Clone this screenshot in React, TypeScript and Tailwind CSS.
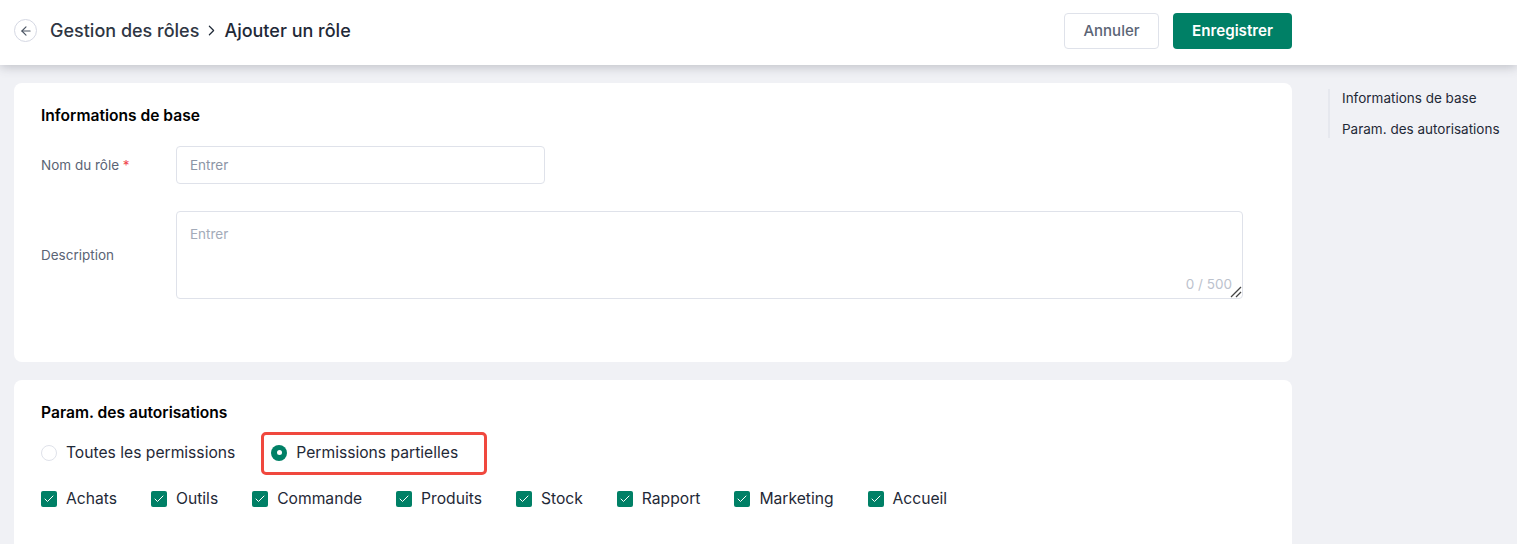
import { ArrowLeft, Check, ChevronRight } from 'lucide-react';

const MODULES = ['Achats', 'Outils', 'Commande', 'Produits', 'Stock', 'Rapport', 'Marketing', 'Accueil'];

function Header() {
  return (
    <header className="relative z-10 flex h-[65px] items-center justify-between bg-white pb-[4px] pl-[14px] pr-[225px] shadow-[0_2px_10px_rgba(60,66,80,0.28)]">
      <div className="flex items-center">
        <button className="flex h-[23px] w-[23px] items-center justify-center rounded-full border border-[#d5d8e3] text-[#4b5563]">
          <ArrowLeft size={14} strokeWidth={2} />
        </button>
        <span className="ml-[13px] text-[18px] font-medium text-[#2f3643]">Gestion des rôles</span>
        <ChevronRight size={17} strokeWidth={1.7} className="mx-[4px] text-[#1f2937]" />
        <span className="text-[18px] font-medium text-[#1f2937]">Ajouter un rôle</span>
      </div>
      <div className="flex items-center gap-[14px]">
        <button className="h-[36px] w-[95px] rounded border border-[#dfe2ea] bg-white pt-[1px] text-[15px] font-medium text-[#5b6475]">Annuler</button>
        <button className="h-[36px] w-[119px] rounded bg-[#008066] pt-[1px] text-[15.2px] font-semibold text-white">Enregistrer</button>
      </div>
    </header>
  );
}

function Card({ title, className, children }: { title: string; className: string; children: React.ReactNode }) {
  return (
    <section className={`rounded-lg bg-white px-[27px] ${className}`}>
      <h2 className="text-[15.6px] leading-[22px] font-semibold text-black">{title}</h2>
      {children}
    </section>
  );
}

export default function App() {
  return (
    <div className="h-[544px] overflow-hidden bg-[#f0f1f5] font-['Inter',sans-serif]">
      <Header />
      <div className="flex pl-[14px] pt-[18px]">
        <main className="flex w-[1278px] shrink-0 flex-col gap-[18px]">
          <Card title="Informations de base" className="h-[279px] pt-[22px]">
            <div className="mt-[19px] flex items-center">
              <label className="w-[135px] text-[13.5px] leading-[20px] text-[#5b6475]">
                Nom du rôle <span className="text-[#f0484e]">*</span>
              </label>
              <div className="flex h-[38px] w-[369px] items-center rounded border border-[#dfe2ea] px-[13px] text-[13.5px] leading-[20px] text-[#8c95a6]">Entrer</div>
            </div>
            <div className="mt-[27px] flex items-center">
              <label className="w-[135px] text-[13.5px] leading-[20px] text-[#5b6475]">Description</label>
              <div className="relative h-[88px] w-[1067px] rounded border border-[#dfe2ea] px-[13px] pt-[13px] text-[13.5px] leading-[18px] text-[#a3abb9]">
                Entrer
                <span className="absolute bottom-[5px] right-[10px] text-[13.5px] leading-[18px] text-[#bcc2cd]">0 / 500</span>
                <svg width="12" height="12" viewBox="0 0 12 12" className="absolute bottom-0 right-0 text-[#444]">
                  <path d="M1 11 L11 1 M6 11 L11 6" stroke="currentColor" strokeWidth="1.3" />
                </svg>
              </div>
            </div>
          </Card>

          <Card title="Param. des autorisations" className="h-[200px] pt-[22px]">
            <div className="mt-[17px] flex h-[24px] items-center text-[15.65px] text-[#1f2937]">
              <span className="h-4 w-4 rounded-full border border-[#dfe2ea]" />
              <span className="ml-[9px]">Toutes les permissions</span>
              <div className="relative ml-[36px] flex items-center">
                <span className="flex h-4 w-4 items-center justify-center rounded-full bg-[#008066]">
                  <span className="h-[5px] w-[5px] rounded-full bg-white" />
                </span>
                <span className="ml-[9px]">Permissions partielles</span>
                {/* annotation frame from the screenshot */}
                <span className="absolute -top-[9px] -left-[10px] h-[43px] w-[226px] rounded-[5px] border-[3px] border-[#f0483e]" />
              </div>
            </div>
            <div className="mt-[22px] flex items-center gap-[34px] text-[15.65px] text-[#1f2937]">
              {MODULES.map(name => (
                <div key={name} className="flex items-center gap-[9px]">
                  <span className="flex h-4 w-4 items-center justify-center rounded-[2px] bg-[#008066] text-white">
                    <Check size={12} strokeWidth={2} />
                  </span>
                  {name}
                </div>
              ))}
            </div>
          </Card>
        </main>

        <nav className="ml-[36px] mt-[6px] flex h-[49px] flex-col justify-between border-l-2 border-[#e6e8ee] pl-[12px] text-[13.5px] leading-[18px] text-[#1f2937]">
          <a>Informations de base</a>
          <a>Param. des autorisations</a>
        </nav>
      </div>
    </div>
  );
}
